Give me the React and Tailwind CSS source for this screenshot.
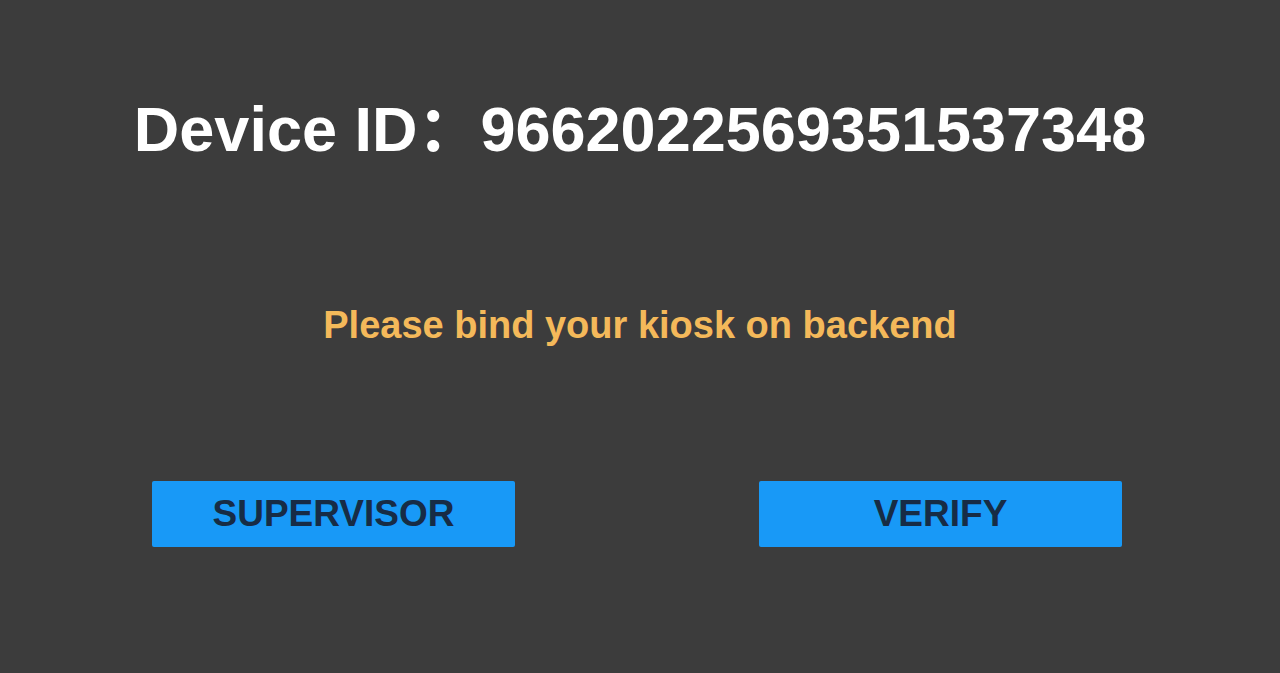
export default function App() {
  return (
    <div
      className="h-[673px] w-full bg-[#3c3c3c] flex flex-col"
      style={{ fontFamily: '"Liberation Sans", Arial, sans-serif' }}
    >
      <h1 className="pt-[92px] text-center text-[63px] leading-[64px] font-bold text-white">
        Device ID
        <span style={{ fontFamily: '"Noto Sans CJK SC", sans-serif' }}>：</span>
        9662022569351537348
      </h1>

      <p className="mt-[145px] text-center text-[38px] leading-[38px] font-bold text-[#f4b95a]">
        Please bind your kiosk on backend
      </p>

      <div className="mt-[137px] flex justify-between pl-[152px] pr-[158px]">
        <button className="w-[363px] h-[66px] rounded-[2px] bg-[#1899f7] text-[37px] font-bold text-[#172c45]">
          SUPERVISOR
        </button>
        <button className="w-[363px] h-[66px] rounded-[2px] bg-[#1899f7] text-[37px] font-bold text-[#172c45]">
          VERIFY
        </button>
      </div>
    </div>
  );
}
